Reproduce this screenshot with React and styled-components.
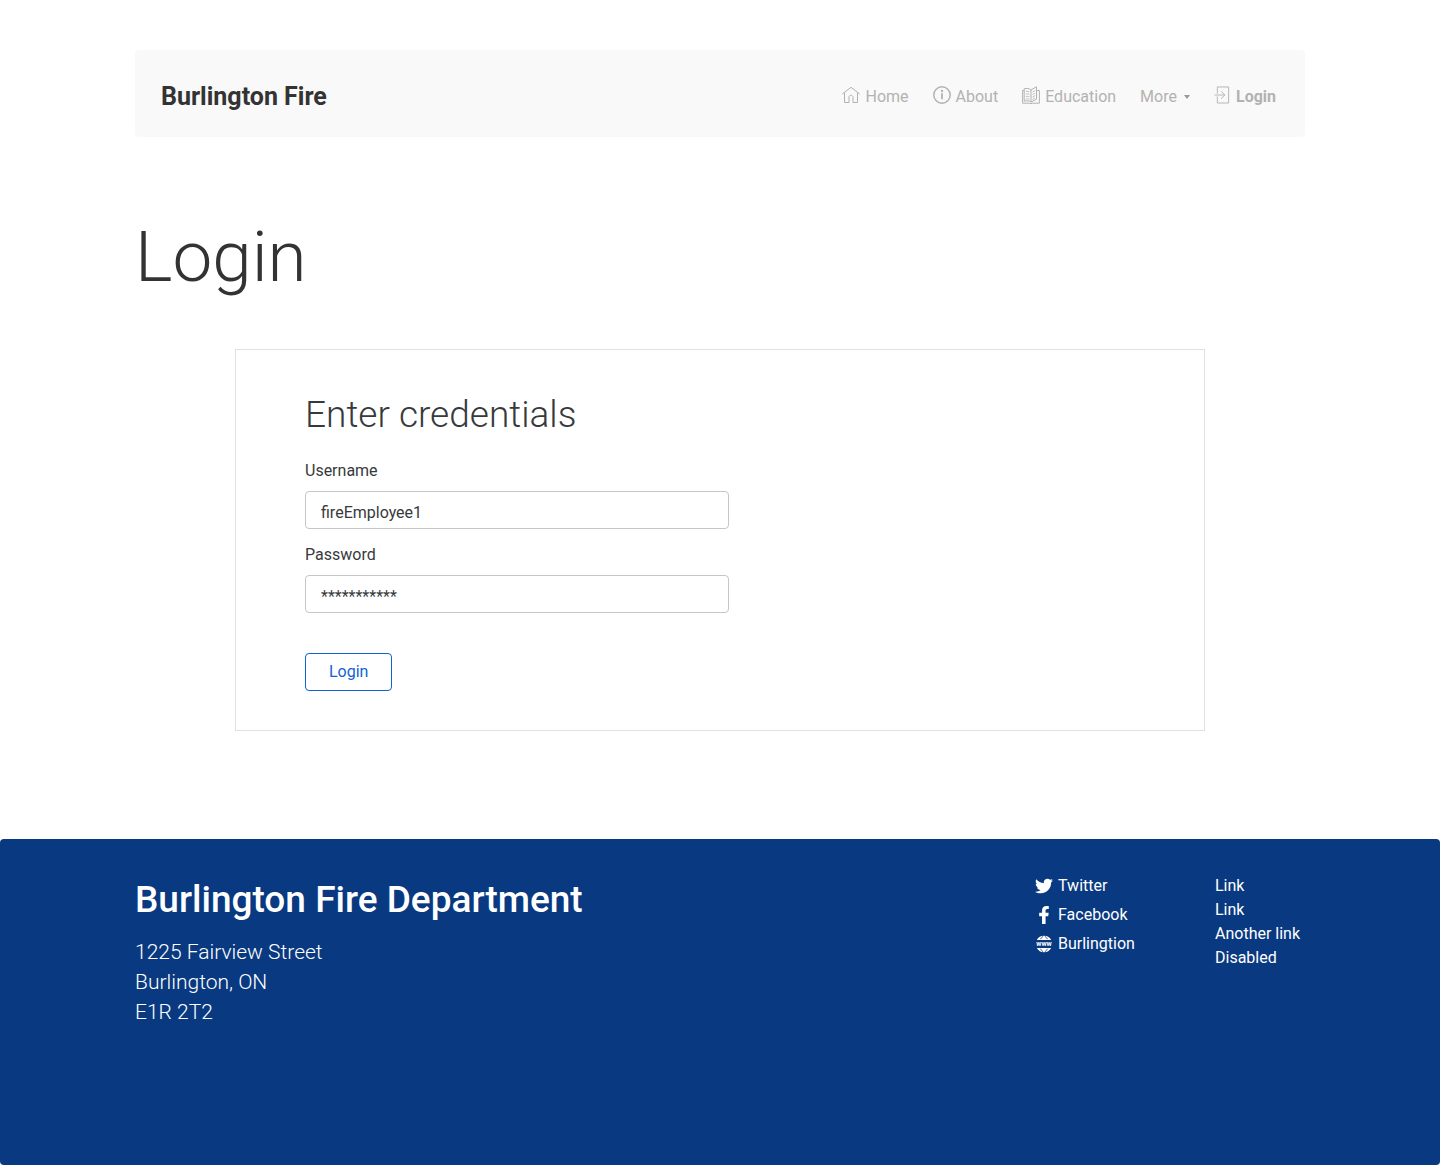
import React from "react";
import styled, { createGlobalStyle } from "styled-components";
import { FaTwitter, FaFacebookF } from "react-icons/fa";

const GlobalStyle = createGlobalStyle`
  *, *::before, *::after { box-sizing: border-box; }
  body {
    margin: 0;
    background: #fff;
    color: #373a3c;
    font: 400 16px/24px Roboto, "Liberation Sans", sans-serif;
  }
  h1, h2, p, ul { margin: 0; padding: 0; }
  ul { list-style: none; }
  a { color: inherit; text-decoration: none; }
`;

const Page = styled.div`
  display: flex;
  flex-direction: column;
  min-height: 100vh;
`;

const Container = styled.div`
  width: 100%;
  max-width: 1202px;
  margin: 0 auto;
  padding: 0 16px;
`;

const Header = styled.header`
  display: flex;
  flex-wrap: wrap;
  align-items: center;
  justify-content: space-between;
  gap: 16px;
  margin-top: 50px;
  padding: 27px 29px 20px 26px;
  border-radius: 4px;
  background: #f9f9f9;
`;

const Brand = styled.a`
  color: #333;
  font-size: 25px;
  font-weight: 700;
  line-height: 40px;
`;

const Nav = styled.nav`
  display: flex;
  flex-wrap: wrap;
  align-items: center;
  gap: 24px;
`;

const NavLink = styled.a`
  display: flex;
  align-items: center;
  gap: 5px;
  color: #b2b2b2;
  font-weight: ${(p) => (p.$active ? 700 : 400)};

  svg { margin-bottom: 4px; }
`;

const MenuButton = styled.button`
  display: flex;
  align-items: center;
  gap: 7px;
  padding: 0;
  border: 0;
  background: none;
  color: #b2b2b2;
  font: inherit;
  cursor: pointer;
`;

const Caret = styled.span`
  border-top: 4px solid #999;
  border-left: 3px solid transparent;
  border-right: 3px solid transparent;
`;

const PageTitle = styled.h1`
  margin: 76px 0 48px;
  color: #333;
  font-size: 71px;
  font-weight: 300;
  line-height: 88px;
`;

const Card = styled.section`
  margin: 0 100px 108px;
  padding: 41px 69px 39px;
  border: 1px solid #e1e1e1;
  @media (max-width: 900px) {
    margin: 0 0 64px;
    padding: 32px 24px;
  }
`;

const CardTitle = styled.h2`
  margin-bottom: 20px;
  font-size: 37px;
  font-weight: 300;
  line-height: 48px;
`;

const Form = styled.form`
  display: flex;
  flex-direction: column;
  align-items: flex-start;
`;

const Field = styled.div`
  display: flex;
  flex-direction: column;
  gap: 8px;
  width: 100%;
  max-width: 424px;
  margin-bottom: 14px;
`;

const Input = styled.input`
  width: 100%;
  height: 38px;
  padding: 4px 15px 0;
  border: 1px solid #c6c6c6;
  border-radius: 4px;
  background: #fff;
  color: inherit;
  font: inherit;
`;

const SubmitButton = styled.button`
  height: 38px;
  margin-top: 26px;
  padding: 0 23px;
  border: 1px solid #1062d3;
  border-radius: 4px;
  background: #fff;
  color: #1062d3;
  font: inherit;
  cursor: pointer;
`;

const Footer = styled.footer`
  flex: 1 0 auto;
  padding: 35px 0 136px;
  border-radius: 4px;
  background: #093980;
  color: #fff;
`;

const FooterColumns = styled.div`
  display: grid;
  grid-template-columns: 1fr 180px 90px;
  @media (max-width: 900px) {
    grid-template-columns: 1fr;
    gap: 32px;
  }
`;

const FooterTitle = styled.h2`
  margin-bottom: 11px;
  font-size: 37px;
  font-weight: 500;
  line-height: 52px;
`;

const Address = styled.address`
  font-size: 21px;
  font-style: normal;
  font-weight: 300;
  line-height: 30px;
`;

const SocialList = styled.ul`
  display: flex;
  flex-direction: column;
  gap: 5px;
`;

const SocialLink = styled.a`
  display: flex;
  align-items: center;
  gap: 5px;
`;

const Icon = ({ size = 18, children, ...rest }) => (
  <svg width={size} height={size} viewBox={`0 0 ${size} ${size}`} fill="none" stroke="currentColor" aria-hidden="true" {...rest}>
    {children}
  </svg>
);

const HomeIcon = () => (
  <Icon>
    <path d="M.3 8 9 1.3 17.7 8M2.5 6.8v9.7H7v-5.3c0-2.6 4-2.6 4 0v5.3h4.5V6.8" />
  </Icon>
);

const InfoIcon = () => (
  <Icon>
    <circle cx="9" cy="9" r="8.2" strokeWidth="1.5" />
    <path d="M9 7.300v6" strokeWidth="1.800" />
    <circle cx="9" cy="5" r="1.2" fill="currentColor" stroke="none" />
  </Icon>
);

const BookIcon = () => (
  <Icon>
    <path d="M9 4C7.5 2.4 4.5 2 2.2 2.8v12.4C5 14.4 7.5 14.8 9 16V4l5.5-3.2v12.4L9 16" />
    <path d="M2.2 4.5H.6v12.7h7.1q1.3 1 2.6 0h7.1V4.500h-2.9" />
    <path d="M3.8 5.5q2-.5 3.6.3M3.8 8q2-.5 3.6.3M3.8 10.5q2-.5 3.6.3M3.8 13q2-.5 3.6.3M10.5 6l2.5-1.4M10.5 8.5 13 7.1M10.5 11 13 9.6M10.5 13.3 13 11.9" strokeWidth=".8" />
  </Icon>
);

const LoginIcon = () => (
  <Icon width="17">
    <path d="M3.5 7.5V.5h12v17h-12v-7M.5 9h10.800M7.500 5l4 4-4 4" />
  </Icon>
);

const WebIcon = () => (
  <Icon>
    <g fill="currentColor" stroke="none">
      <path d="M1.8 5A8.300 8.300 0 0 1 16.200 5ZM1.800 13a8.300 8.300 0 0 0 14.400 0Z" />
      <text x="9" y="11" textAnchor="middle" fontSize="7" fontWeight="700">www</text>
    </g>
    <path d="M5.500 4.200Q6.500 2.300 8.200 1.200M12.500 4.200Q11.500 2.300 9.800 1.200M5.500 13.800q1 2 2.700 3M12.500 13.800q-1 2-2.700 3" stroke="#093980" strokeWidth=".8" />
  </Icon>
);

const navItems = [
  { label: "Home", icon: HomeIcon },
  { label: "About", icon: InfoIcon },
  { label: "Education", icon: BookIcon },
];

const socials = [
  { label: "Twitter", icon: <FaTwitter size={18} aria-hidden="true" /> },
  { label: "Facebook", icon: <FaFacebookF size={18} aria-hidden="true" /> },
  { label: "Burlingtion", icon: <WebIcon /> },
];

const footerLinks = ["Link", "Link", "Another link", "Disabled"];

export default function App() {
  return (
    <Page>
      <GlobalStyle />
      <Container>
        <Header>
          <Brand href="#">Burlington Fire</Brand>
          <Nav aria-label="Main">
            {navItems.map(({ label, icon: ItemIcon }) => (
              <NavLink key={label} href="#">
                <ItemIcon />
                {label}
              </NavLink>
            ))}
            <MenuButton type="button" aria-haspopup="true">
              More
              <Caret />
            </MenuButton>
            <NavLink href="#" $active aria-current="page">
              <LoginIcon />
              Login
            </NavLink>
          </Nav>
        </Header>
        <main>
          <PageTitle>Login</PageTitle>
          <Card>
            <CardTitle>Enter credentials</CardTitle>
            <Form onSubmit={(e) => e.preventDefault()}>
              <Field>
                <label htmlFor="username">Username</label>
                <Input id="username" type="text" defaultValue="fireEmployee1" />
              </Field>
              <Field>
                <label htmlFor="password">Password</label>
                <Input id="password" type="text" autoComplete="off" defaultValue="***********" />
              </Field>
              <SubmitButton type="submit">Login</SubmitButton>
            </Form>
          </Card>
        </main>
      </Container>
      <Footer>
        <Container>
          <FooterColumns>
            <div>
              <FooterTitle>Burlington Fire Department</FooterTitle>
              <Address>
                1225 Fairview Street
                <br />
                Burlington, ON
                <br />
                E1R 2T2
              </Address>
            </div>
            <SocialList>
              {socials.map(({ label, icon }) => (
                <li key={label}>
                  <SocialLink href="#">
                    {icon}
                    {label}
                  </SocialLink>
                </li>
              ))}
            </SocialList>
            <ul>
              {footerLinks.map((label, i) => (
                <li key={i}>
                  <a href="#">{label}</a>
                </li>
              ))}
            </ul>
          </FooterColumns>
        </Container>
      </Footer>
    </Page>
  );
}
